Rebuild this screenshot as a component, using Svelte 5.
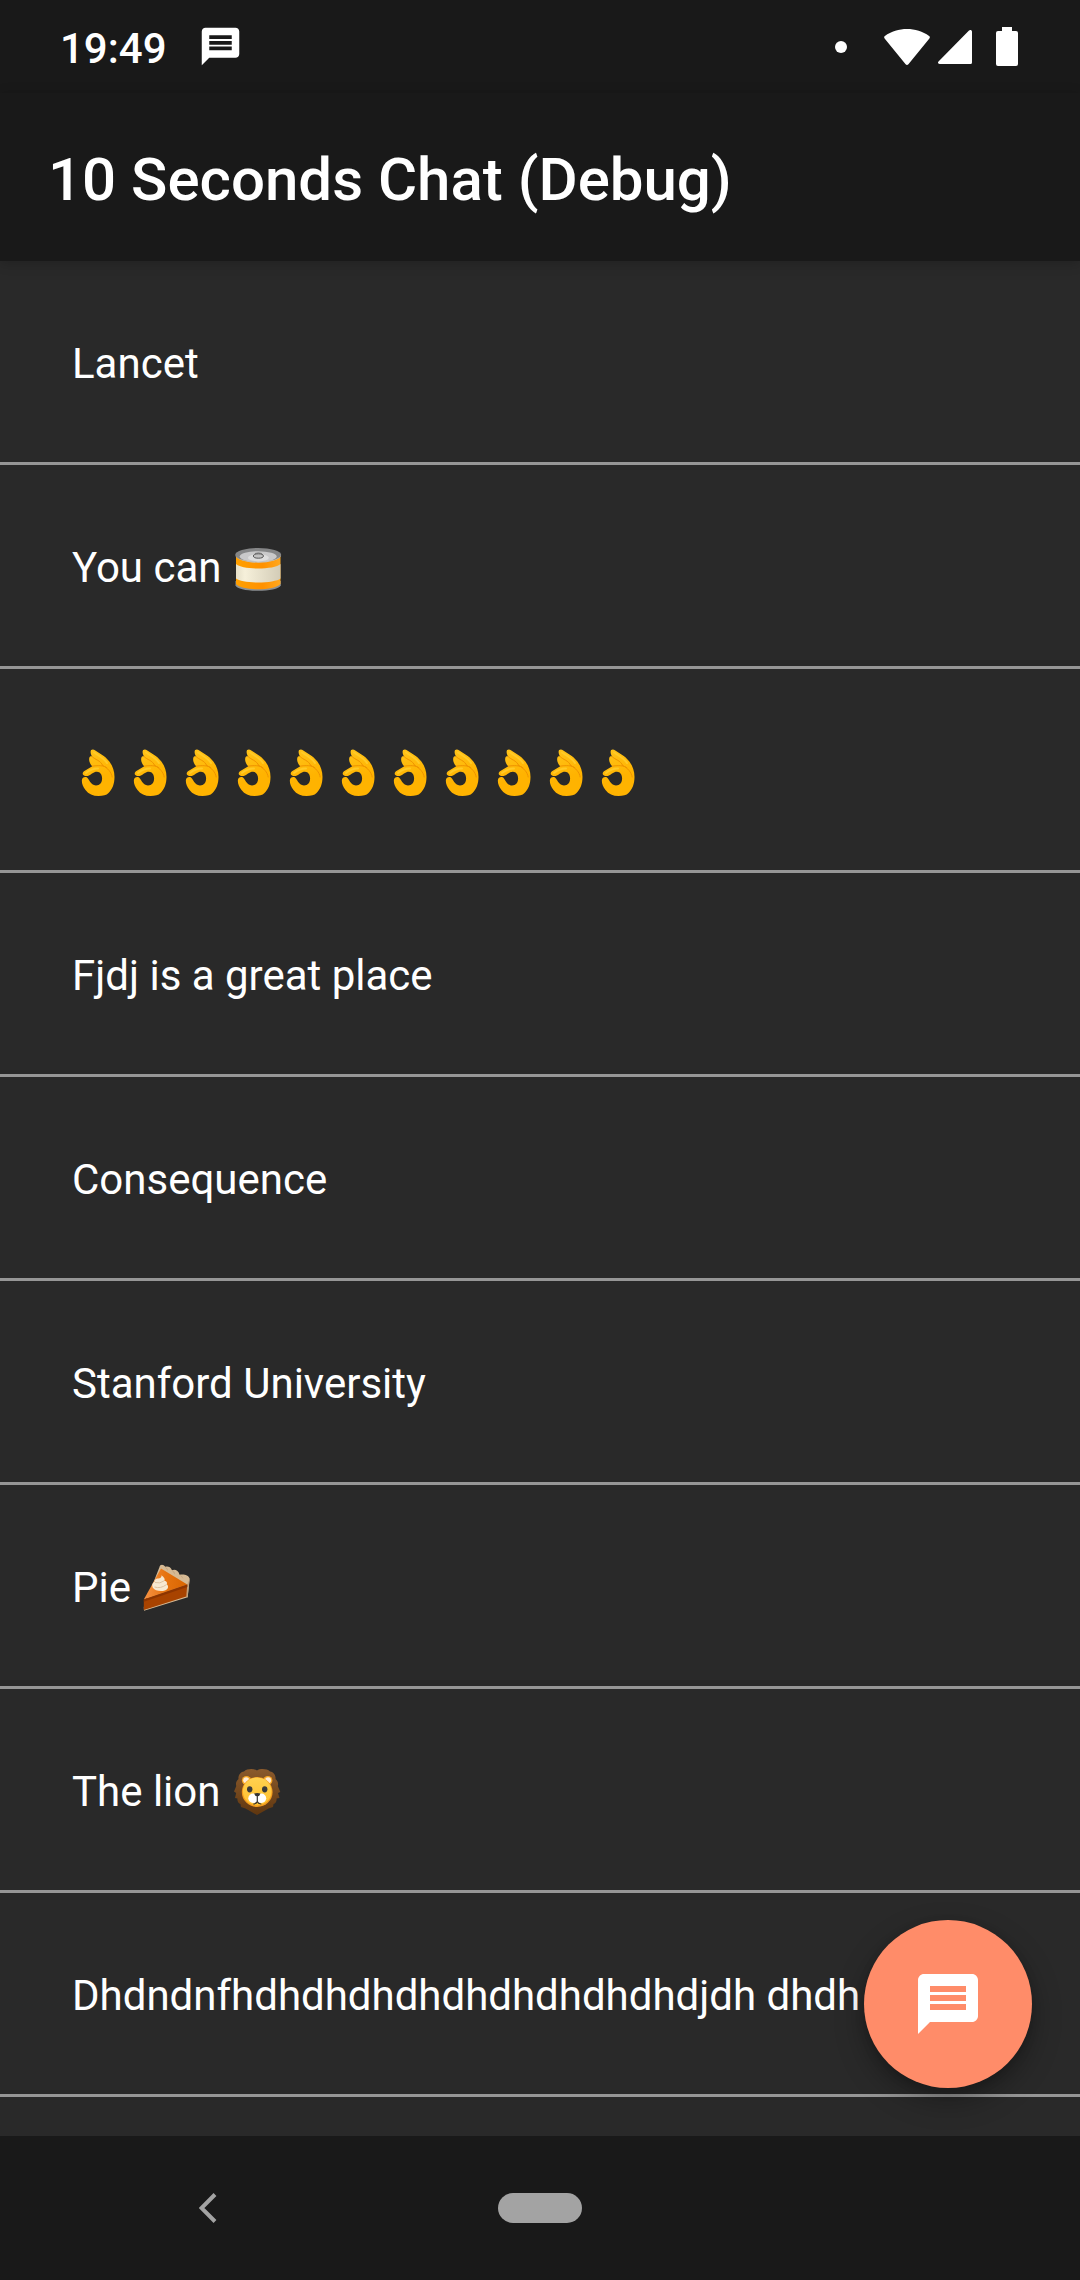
<script>
  const okHands = Array(11).fill('ok');
  const chats = [
    { text: 'Lancet' },
    { text: 'You can ', emoji: ['can'] },
    { text: '', emoji: okHands },
    { text: 'Fjdj is a great place' },
    { text: 'Consequence' },
    { text: 'Stanford University' },
    { text: 'Pie ', emoji: ['pie'] },
    { text: 'The lion ', emoji: ['lion'] },
    { text: 'Dhdndnfhdhdhdhdhdhdhdhdhdhdjdh dhdh' }
  ];
  const labels = { can: 'canned food', ok: 'OK hand', pie: 'pie', lion: 'lion' };
</script>

{#snippet message()}
  <svg class="message" viewBox="0 0 24 24" aria-hidden="true">
    <path d="M20 2H4c-1.1 0-1.99.9-1.99 2L2 22l4-4h14c1.1 0 2-.9 2-2V4c0-1.1-.9-2-2-2zm-2 12H6v-2h12v2zm0-3H6V9h12v2zm0-3H6V6h12v2z" />
  </svg>
{/snippet}

{#snippet glyph(name)}
  <svg class="emoji" viewBox="0 0 52 48" role="img" aria-label={labels[name]}>
    {#if name === 'can'}
      <path fill="#8a8f92" d="M3.500 38v4.500C5 46 15 47.800 26 47.800S47 46 48.800 42.500V38z" />
      <path fill="url(#tin)" d="M4 12v29c3 3.500 12 5.300 22 5.300S45.500 44.500 48.500 41V12z" />
      <path fill="url(#paper)" d="M4 21c3 3 12 4.500 22 4.500S45.500 24 48.500 21v14.500C45.500 38 36 39.500 26 39.500S7 38 4 35.500z" />
      <ellipse cx="26.200" cy="12" rx="23" ry="7" fill="#858687" />
      <path fill="#c6c7c8" d="M3.200 12.500C5 17 15 19.700 26.200 19.700S47.500 17 49.200 12.500C46 17 37 18.600 26.200 18.600S6 17 3.200 12.500z" />
      <ellipse cx="26.200" cy="13.600" rx="18.500" ry="5.400" fill="#c9c9ca" />
      <ellipse cx="26.400" cy="14.800" rx="10.500" ry="3.600" fill="#dedede" />
      <ellipse cx="26.400" cy="13" rx="5" ry="2.200" fill="#c2c2c2" stroke="#4a4a4a" stroke-width="0.900" />
      <path fill="none" stroke="#666" stroke-width="0.800" d="M23 10.500q3.400-1.200 6.800 0" />
    {:else if name === 'ok'}
      <path
        fill="url(#skin)"
        fill-rule="evenodd"
        d="M18.600 3.800C18.500 1.500 21 .8 23.300 2.400L31 7.600C38.500 12.800 42.600 20.500 42.500 29C42.400 36 40.500 41 36.500 45C34.500 47.200 31 48 26.500 48C21 48 16.500 46 13.500 42C11 38.700 9.600 35.500 9.900 32C10.100 29.600 12.500 28.300 14.700 29.200C17 30.200 18.200 37.300 24 37.400C28 37.400 30.100 34.500 30.100 30.500C30.100 26.500 28 23.900 25 23.800C21.500 23.700 19.500 26.500 17 27.500C14.800 28.400 12.300 28.200 11.100 26.800C10 25.400 11.300 23.600 12.800 22.700L20.300 18.300C18.300 16.700 16.400 12.500 17.400 9.500C17.800 8.400 18.900 8 20 8.400C19.200 7 18.600 5.600 18.600 3.800z"
      />
      <path fill="none" stroke="#f09300" stroke-width="1" stroke-linecap="round" d="M20.200 8.600C23 12 28.500 12 30.700 17.500M20.500 18.100C25 17.500 32 17 35 19.800M30.800 17.500C35.500 20 39.500 24 40.200 29" />
      <path fill="none" stroke="#ffca28" stroke-width="2" stroke-linecap="round" d="M14 25C18 22 21 20.500 26 20.600M22 4.500C26 7.500 32 10 35 15" />
    {:else if name === 'pie'}
      <path fill="#d6ba94" d="M18.500 4C19 1 22.500 1 24.300 3.800C26.500 3 29.500 3.500 31 7.300C33.500 6 37.500 7 38.600 11.800C42 11 47.500 11.500 48.700 15.700L46.700 34.200L3 47.800L2.800 44z" />
      <path fill="#bfa17c" d="M24 4q3 1 3 4M31 7.400q3 1 3 4M38.600 12q3 1 4 4M48.600 16l-2 18.500-1.500-1 1.200-12z" />
      <path fill="url(#pumpkin)" d="M20 5.500L46.300 21.500L2.800 36.500z" />
      <path fill="#a84300" d="M2.800 36.500L46.300 21.500L45.300 33.500L2.800 47z" />
      <path fill="#8d3500" d="M2.800 36.500L46.300 21.500V24L2.800 38.800z" />
      <path fill="#f7e8d0" d="M20.600 12.200C22.500 14 24.500 15.600 23.300 17.800C26 18.200 26.500 20 25.700 21.300C28 23 27.500 26.500 23.800 27.500C20 28.700 13.500 28 11.700 24.500C10.500 22 11.500 19.600 13.500 18.800C13 17 15 15.500 17.300 15.500C19 15.500 20.600 14.500 20.600 12.200z" />
      <path fill="none" stroke="#d9bd9b" stroke-width="0.900" d="M14 19.500q5 1.500 9-1.600M13.500 24q6 2 12-2.400" />
    {:else}
      <path
        fill="url(#mane)"
        d="M26 3.500C29 1.500 36 1.500 39 4.500C43 5 45 9 44.500 12C47 14 47.500 17 46.800 19L49.300 25L47 26L48.500 31L45.500 31.500C46 34 44.500 36.500 42.500 37L42 40L37.500 41.500L26 48L14.500 41.500L10 40L9.500 37C7.500 36.500 6 34 6.500 31.500L4 31L5.200 26L3 24.500L5.300 19C4.500 17 5 14 7.500 12C7 9 9 5 13 4.500C16 1.500 23 1.500 26 3.500z"
      />
      <circle cx="15.500" cy="13.500" r="4.600" fill="#f9a825" />
      <circle cx="36.800" cy="13.500" r="4.600" fill="#f9a825" />
      <circle cx="15.200" cy="13.300" r="3" fill="#ffecd5" />
      <circle cx="37.100" cy="13.300" r="3" fill="#ffecd5" />
      <ellipse cx="26.200" cy="25" rx="15.400" ry="15" fill="#f29b1d" />
      <ellipse cx="26.200" cy="24.400" rx="14.300" ry="14" fill="url(#face)" />
      <ellipse cx="18.700" cy="22.300" rx="2.700" ry="3.100" fill="#3a3a3a" />
      <ellipse cx="33.700" cy="22.300" rx="2.700" ry="3.100" fill="#3a3a3a" />
      <circle cx="22" cy="31.300" r="4.700" fill="#fff" />
      <circle cx="30.500" cy="31.300" r="4.700" fill="#fff" />
      <path fill="#fff" d="M22 29h8.500v6.500H22z" />
      <path fill="#333" d="M23.200 26.400q3-1 6.200 0q-.6 2.600-3.100 2.900q-2.500-.3-3.100-2.900z" />
      <path fill="none" stroke="#333" stroke-width="1.200" stroke-linecap="round" d="M26.300 29v5.500M22.700 37q2.800-.3 3.600-2.500q.8 2.200 3.600 2.500" />
    {/if}
  </svg>
{/snippet}

<svg class="defs" aria-hidden="true">
  <defs>
    <linearGradient id="tin"><stop offset="0" stop-color="#ffa000" /><stop offset="0.600" stop-color="#ff9100" /><stop offset="1" stop-color="#ffa820" /></linearGradient>
    <linearGradient id="paper"><stop offset="0" stop-color="#e5dfc8" /><stop offset="0.200" stop-color="#f6f0da" /><stop offset="1" stop-color="#d3ccb7" /></linearGradient>
    <linearGradient id="skin" x1="0" y1="0" x2="0.300" y2="1"><stop offset="0" stop-color="#ffc51c" /><stop offset="0.700" stop-color="#ffb300" /></linearGradient>
    <linearGradient id="pumpkin"><stop offset="0" stop-color="#f79345" /><stop offset="0.500" stop-color="#e67310" /><stop offset="1" stop-color="#d96500" /></linearGradient>
    <linearGradient id="mane" x1="0" y1="0" x2="0" y2="1"><stop offset="0" stop-color="#8a5a2c" /><stop offset="1" stop-color="#5f360f" /></linearGradient>
    <linearGradient id="face" x1="0" y1="0" x2="0" y2="1"><stop offset="0" stop-color="#ffd150" /><stop offset="1" stop-color="#ffc02e" /></linearGradient>
  </defs>
</svg>

<div class="screen">
  <div class="status">
    <time>19:49</time>
    {@render message()}
    <div class="system">
      <span class="dot"></span>
      <svg class="wifi" viewBox="0 0 46 36" aria-label="Wi-Fi" role="img">
        <path d="M.6 9.400C-.1 8.500 0 7.500.9 6.900C13.500-2.300 32.500-2.300 45.100 6.900C46 7.500 46.100 8.500 45.400 9.400L24.400 35.200C23.600 36.200 22.400 36.200 21.600 35.200z" />
      </svg>
      <svg class="signal" viewBox="0 0 34 34" aria-label="Signal" role="img">
        <path d="M.5 31.500L31 .6C32.200-.5 34 .2 34 1.800V32.500Q34 34 32.500 34H1.600C0 34-.5 32.500.5 31.500z" />
      </svg>
      <svg class="battery" viewBox="0 0 22 39" aria-label="Battery" role="img">
        <path d="M6 0h10v4h4q2 0 2 2v31q0 2-2 2H2q-2 0-2-2V6q0-2 2-2h4z" />
      </svg>
    </div>
  </div>

  <header><h1>10 Seconds Chat (Debug)</h1></header>

  <main>
    <ul>
      {#each chats as chat}
        <li>
          <button class="row" type="button">
            {#if chat.text}<span>{chat.text}</span>{/if}
            {#each chat.emoji ?? [] as name}{@render glyph(name)}{/each}
          </button>
        </li>
      {/each}
    </ul>
    <button class="fab" type="button" aria-label="New chat">{@render message()}</button>
  </main>

  <nav>
    <button class="back" type="button" aria-label="Back">
      <svg viewBox="0 0 18 30" aria-hidden="true"><path d="M16 1.500L2.500 15L16 28.500" /></svg>
    </button>
    <button class="home" type="button" aria-label="Home"></button>
    <span></span>
  </nav>
</div>

<style>
  :global(body) {
    background: #292929;
  }
  .screen {
    display: flex;
    flex-direction: column;
    min-height: 100vh;
    color: #fff;
    background: #292929;
    font-family: Roboto, sans-serif;
    font-size: 42px;
    line-height: 50px;
  }
  button {
    margin: 0;
    padding: 0;
    border: 0;
    background: none;
    color: inherit;
    font: inherit;
  }
  svg {
    display: block;
    flex: none;
    fill: #fff;
  }
  .defs {
    position: absolute;
    width: 0;
    height: 0;
  }
  .status {
    display: flex;
    align-items: center;
    box-sizing: border-box;
    height: 93px;
    padding: 0 62px 0 60px;
    background: #191919;
  }
  time {
    padding-top: 4px;
    font-weight: 500;
  }
  .status .message {
    width: 45px;
    height: 45px;
    margin-left: 31px;
  }
  .system {
    display: flex;
    align-items: center;
    margin-left: auto;
  }
  .dot {
    width: 12px;
    height: 12px;
    margin-right: 37px;
    border-radius: 50%;
    background: #fff;
  }
  .wifi {
    width: 46px;
    height: 36px;
    margin-right: 8px;
  }
  .signal {
    width: 34px;
    height: 34px;
    margin-right: 24px;
  }
  .battery {
    width: 22px;
    height: 39px;
  }
  header {
    display: flex;
    align-items: center;
    box-sizing: border-box;
    height: 168px;
    padding: 6px 48px 0;
    background: #191919;
    box-shadow: 0 2px 12px rgba(0, 0, 0, 0.2);
    z-index: 1;
  }
  h1 {
    margin: 0;
    font-size: 60px;
    line-height: 72px;
    font-weight: 500;
  }
  main {
    position: relative;
    flex: 1;
  }
  ul {
    margin: 0;
    padding: 0;
    list-style: none;
  }
  .row {
    display: flex;
    align-items: flex-start;
    width: 100%;
    padding: 78px 72px 73px;
    border-bottom: 3px solid #969696;
    text-align: left;
    white-space: pre;
  }
  .emoji {
    width: 52px;
    height: 48px;
  }
  .row:not(:has(span)) .emoji {
    height: 50px;
  }
  .fab {
    position: absolute;
    right: 48px;
    bottom: 48px;
    display: flex;
    align-items: center;
    justify-content: center;
    width: 168px;
    height: 168px;
    border-radius: 50%;
    background: #ff8c69;
    box-shadow: 0 12px 30px rgba(0, 0, 0, 0.3), 0 4px 10px rgba(0, 0, 0, 0.15);
  }
  .fab .message {
    width: 72px;
    height: 72px;
  }
  nav {
    display: grid;
    grid-template-columns: 1fr 84px 1fr;
    align-items: center;
    height: 144px;
    background: #191919;
  }
  .back {
    justify-self: center;
    padding: 24px 82px 24px 0;
  }
  .back svg {
    width: 18px;
    height: 30px;
  }
  .back path {
    fill: none;
    stroke: #a3a3a3;
    stroke-width: 4;
  }
  .home {
    height: 30px;
    border-radius: 15px;
    background: #a3a3a3;
  }
</style>
